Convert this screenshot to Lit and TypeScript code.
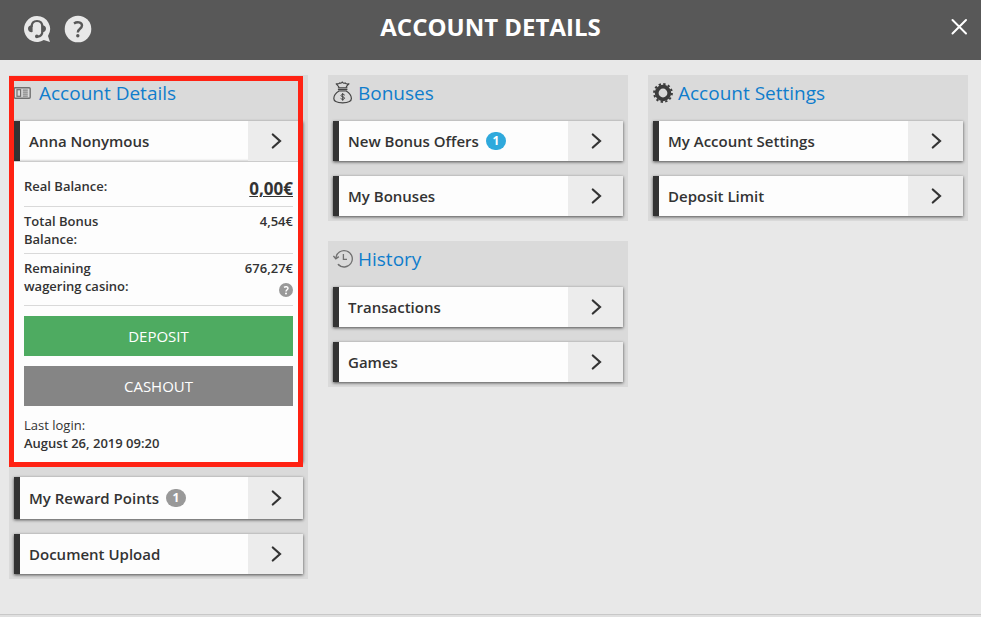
import { LitElement, html, css, nothing } from "lit";
import { customElement, property } from "lit/decorators.js";

const chevron = html`<svg class="chevron" width="12" height="18" viewBox="0 0 12 18" aria-hidden="true">
  <path d="M2.8 2.5 L10 9 L2.8 15.5" fill="none" stroke="#333" stroke-width="2.2" stroke-linecap="round" />
</svg>`;

const icons: Record<string, unknown> = {
  card: html`<svg width="20" height="24" viewBox="0 0 20 24" aria-hidden="true">
    <g fill="none" stroke="#707070">
      <rect x="0.2" y="6.7" width="16" height="10.6" rx="1" stroke-width="1.4" />
      <rect x="3" y="8.7" width="3.6" height="6.6" stroke-width="1.2" />
      <path d="M8.8 9.1h5M8.8 11.1h5M8.8 13.1h5M8.8 15.1h5" stroke-width="1" />
    </g>
  </svg>`,
  bag: html`<svg width="20" height="24" viewBox="0 0 20 24" aria-hidden="true">
    <g fill="none" stroke="#444" stroke-width="1.2" stroke-linejoin="round" stroke-linecap="round">
      <path d="M6 6.2 C5.2 4.8 4 3.6 3.2 2.8 C4.6 3.2 5.8 3 6.8 1.8 C7.4 2.6 8.2 2.3 9.2 1 C10.2 2.3 11.3 2.6 12 1.8 C13 3 14.4 3.2 16 2.8 C15 3.6 13.8 4.8 13.2 6.2" />
      <path d="M5.4 6.8h8.6M5.4 8.6h8.6" />
      <path d="M6 10 C3.4 11.6 0.8 14.4 0.8 17.6 C0.8 20.6 3.2 21.8 9.6 21.8 C16 21.8 18.4 20.6 18.4 17.6 C18.4 14.4 15.8 11.6 13.2 10 Z" />
      <path d="M11.5 13.9 C10.8 13.1 8.2 13 8 14.5 C7.9 16.2 11.5 15.3 11.5 17.2 C11.4 18.7 8.8 18.6 7.9 17.7M9.7 12.4v7" stroke-width="1" />
    </g>
  </svg>`,
  clock: html`<svg width="20" height="24" viewBox="0 0 20 24" aria-hidden="true">
    <g fill="none" stroke="#707070" stroke-width="1.3">
      <path d="M2.9 11.4 A8.2 8.2 0 1 1 5 17.3" />
      <path d="M5 17.3 L7.6 19.1" stroke-dasharray="1.4 1" />
      <path d="M0.4 9 L2.8 11.8 L5.8 9.6" stroke-width="1.4" />
      <path d="M10.4 7 V12.4 H14" />
    </g>
  </svg>`,
  gear: html`<svg width="20" height="24" viewBox="0 0 20 24" aria-hidden="true">
    <circle cx="10" cy="12" r="6.3" fill="none" stroke="#3c3c3c" stroke-width="3.8" />
    <circle cx="10" cy="12" r="8.9" fill="none" stroke="#3c3c3c" stroke-width="2" stroke-dasharray="2.33 2.33" />
  </svg>`,
};

@customElement("menu-row")
export class MenuRow extends LitElement {
  @property() label = "";
  @property() badge = "";
  @property() tone = "grey";

  static styles = css`
    :host { display: block; }
    .row {
      display: flex;
      box-sizing: border-box;
      width: 100%;
      min-height: 40px;
      padding: 0;
      border: 0;
      border-left: 6px solid #333;
      background: #fdfdfd;
      color: #333;
      font: 600 15px/20px "Open Sans", "Noto Sans", sans-serif;
      text-align: left;
      box-shadow: 0 1px 3px rgba(0, 0, 0, 0.65);
      cursor: pointer;
    }
    .tall { min-height: 42px; }
    .text { flex: 1; align-self: center; display: flex; align-items: center; gap: 7px; padding-left: 9px; }
    .arrow { width: 55px; align-self: stretch; background: #ececec; display: flex; align-items: center; justify-content: center; }
    .badge {
      min-width: 20px;
      border-radius: 9px;
      background: #999;
      color: #fff;
      font-size: 12px;
      font-weight: 700;
      line-height: 18px;
      text-align: center;
    }
    .blue { background: #2fa9dc; }
  `;

  render() {
    const tall = this.badge && this.tone === "grey";
    return html`<button class="row ${tall ? "tall" : ""}" type="button">
      <span class="text">${this.label}${this.badge
        ? html`<span class="badge ${this.tone}">${this.badge}</span>`
        : nothing}</span>
      <span class="arrow">${chevron}</span>
    </button>`;
  }
}

@customElement("app-root")
export class AppRoot extends LitElement {
  static styles = css`
    :host {
      display: flex;
      flex-direction: column;
      min-height: 100vh;
      box-sizing: border-box;
      background: #e8e8e8;
      color: #333;
      font: 600 13px/18px "Open Sans", "Noto Sans", sans-serif;
    }
    header {
      display: grid;
      grid-template-columns: 1fr auto 1fr;
      align-items: center;
      height: 60px;
      box-sizing: border-box;
      padding: 0 12px 6px;
      background: #585858;
    }
    h1 { margin: 0; color: #fff; font-size: 24px; line-height: 32px; font-weight: 700; }
    .tools { display: flex; gap: 12px; padding: 4px 0 0 11px; }
    .icon-button { display: block; padding: 0; border: 0; background: none; cursor: pointer; }
    .icon-button svg { display: block; }
    .close { justify-self: end; }
    main {
      display: grid;
      grid-template-columns: 299fr 300fr 320fr;
      gap: 20px;
      align-items: start;
      padding: 15px 13px 15px 9px;
    }
    .column, .rows { display: flex; flex-direction: column; }
    .column { gap: 20px; }
    .rows { gap: 15px; }
    .panel { padding: 0 5px 5px; background: #dadada; }
    h2 {
      display: flex;
      align-items: center;
      gap: 5px;
      height: 36px;
      margin: 0 0 10px;
      color: #0f7dcc;
      font-size: 19px;
      font-weight: 400;
    }
    .marked { position: relative; }
    .marked::after {
      content: "";
      position: absolute;
      inset: 1px 0 -5px -5px;
      border: 5px solid #ff2213;
      pointer-events: none;
    }
    .details { padding: 10px; border-top: 1px solid #ccc; background: #fdfdfd; box-shadow: 0 1px 3px rgba(0, 0, 0, 0.65); }
    .balances { margin: 0; }
    .line { display: flex; justify-content: space-between; padding: 5px 0; border-bottom: 1px solid #d9d9d9; }
    dt { width: 120px; }
    dd { margin: 0; text-align: right; }
    .real { color: inherit; font-size: 17px; line-height: 24px; font-weight: 700; }
    .help { margin: 6px 0 3px auto; }
    .action {
      display: block;
      width: 100%;
      height: 40px;
      margin-top: 10px;
      padding: 0;
      border: 0;
      color: #fff;
      font: 400 15px/20px "Open Sans", "Noto Sans", sans-serif;
      cursor: pointer;
    }
    .deposit { background: #4eab61; }
    .cashout { background: #858585; }
    .login { margin: 10px 0 0; font-weight: 400; }
    .login time { display: block; font-weight: 600; }
    footer { height: 2px; margin-top: auto; border-top: 1px solid #c8c8c8; background: #e0e0e0; }
  `;

  private heading(icon: string, text: string) {
    return html`<h2>${icons[icon]}<span>${text}</span></h2>`;
  }

  render() {
    return html`
      <header>
        <div class="tools">
          <button class="icon-button" type="button" aria-label="Live support">
            <svg width="29" height="28" viewBox="0 0 29 28">
              <path d="M14 1a13 13 0 1 0 6.8 24.1L27 27 25 21A13 13 0 0 0 14 1Z" fill="#e8e8e8" />
              <path d="M8.6 12C8.6 8 10.8 6 14 6S19.4 8 19.4 12V16C19.4 20 17.8 21.4 14.5 21.6" fill="none" stroke="#585858" stroke-width="2.2" />
              <path d="M9.6 10.3v6.8C6.6 17.4 5 15.8 5 13.7S6.6 10 9.6 10.3ZM18.4 10.3v6.8C21.4 17.4 23 15.8 23 13.7S21.4 10 18.4 10.3Z" fill="#585858" />
              <circle cx="13.8" cy="21.4" r="1.8" fill="#585858" />
            </svg>
          </button>
          <button class="icon-button" type="button" aria-label="Help">
            <svg width="28" height="28" viewBox="0 0 28 28">
              <circle cx="14" cy="14" r="13.3" fill="#e8e8e8" />
              <path d="M10 8.4C12.8 6.6 18 6.8 18 10.6C18 13.8 13.8 13.8 13.8 17.4" fill="none" stroke="#585858" stroke-width="2.4" />
              <circle cx="13.8" cy="20.8" r="1.7" fill="#585858" />
            </svg>
          </button>
        </div>
        <h1>ACCOUNT DETAILS</h1>
        <button class="icon-button close" type="button" aria-label="Close">
          <svg width="20" height="20" viewBox="0 0 20 20">
            <path d="M3.5 3 17 16.5M17 3 3.5 16.5" stroke="#fff" stroke-width="2" stroke-linecap="round" />
          </svg>
        </button>
      </header>
      <main>
        <section class="panel">
          <div class="rows">
            <div class="marked">
              ${this.heading("card", "Account Details")}
              <menu-row label="Anna Nonymous"></menu-row>
              <div class="details">
                <dl class="balances">
                  <div class="line"><dt>Real Balance:</dt><dd><a class="real" href="#balance">0,00€</a></dd></div>
                  <div class="line"><dt>Total Bonus Balance:</dt><dd>4,54€</dd></div>
                  <div class="line">
                    <dt>Remaining wagering casino:</dt>
                    <dd>
                      676,27€
                      <button class="icon-button help" type="button" aria-label="About wagering">
                        <svg width="14" height="14" viewBox="0 0 14 14">
                          <circle cx="7" cy="7" r="7" fill="#999" />
                          <path d="M5 4.4C6.4 3.4 9 3.6 9 5.3C9 6.8 7 6.8 7 8.6" fill="none" stroke="#fff" stroke-width="1.5" />
                          <circle cx="7" cy="10.6" r="1" fill="#fff" />
                        </svg>
                      </button>
                    </dd>
                  </div>
                </dl>
                <button class="action deposit" type="button">DEPOSIT</button>
                <button class="action cashout" type="button">CASHOUT</button>
                <p class="login">Last login: <time datetime="2019-08-26T09:20">August 26, 2019 09:20</time></p>
              </div>
            </div>
            <menu-row label="My Reward Points" badge="1"></menu-row>
            <menu-row label="Document Upload"></menu-row>
          </div>
        </section>
        <div class="column">
          <section class="panel">
            ${this.heading("bag", "Bonuses")}
            <div class="rows">
              <menu-row label="New Bonus Offers" badge="1" tone="blue"></menu-row>
              <menu-row label="My Bonuses"></menu-row>
            </div>
          </section>
          <section class="panel">
            ${this.heading("clock", "History")}
            <div class="rows">
              <menu-row label="Transactions"></menu-row>
              <menu-row label="Games"></menu-row>
            </div>
          </section>
        </div>
        <section class="panel">
          ${this.heading("gear", "Account Settings")}
          <div class="rows">
            <menu-row label="My Account Settings"></menu-row>
            <menu-row label="Deposit Limit"></menu-row>
          </div>
        </section>
      </main>
      <footer></footer>
    `;
  }
}
